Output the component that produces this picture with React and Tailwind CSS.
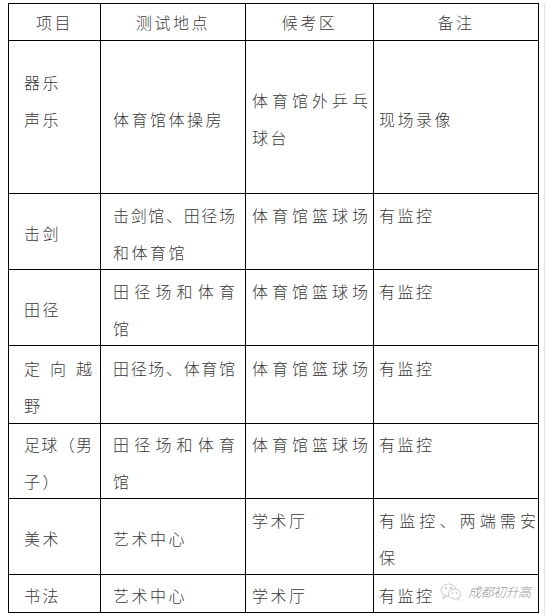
import React from 'react';

// each cell: array of lines; a line is [text, justify?]
const rows = [
  {
    h: 'h-[153px]',
    cells: [
      [['器乐'], ['声乐'], ['']],
      [['体育馆体操房']],
      [['体育馆外乒乓', true], ['球台']],
      [['现场录像']],
    ],
  },
  {
    h: 'h-[76px]',
    cells: [
      [['击剑']],
      [['击剑馆、田径场', true], ['和体育馆']],
      [['体育馆篮球场', true], ['']],
      [['有监控'], ['']],
    ],
  },
  {
    h: 'h-[76px]',
    cells: [
      [['田径']],
      [['田径场和体育', true], ['馆']],
      [['体育馆篮球场', true], ['']],
      [['有监控'], ['']],
    ],
  },
  {
    h: 'h-[78px]',
    cells: [
      [['定向越', true], ['野']],
      [['田径场、体育馆', true], ['']],
      [['体育馆篮球场', true], ['']],
      [['有监控'], ['']],
    ],
  },
  {
    h: 'h-[75px]',
    cells: [
      [['足球（男', true], ['子）']],
      [['田径场和体育', true], ['馆']],
      [['体育馆篮球场', true], ['']],
      [['有监控'], ['']],
    ],
  },
  {
    h: 'h-[76px]',
    cells: [
      [['美术']],
      [['艺术中心']],
      [['学术厅'], ['']],
      [['有监控、两端需安', true], ['保']],
    ],
  },
  {
    h: 'h-[38px]',
    cells: [[['书法']], [['艺术中心']], [['学术厅']], [['有监控']]],
  },
];

const colW = ['w-[92px]', 'w-[145px]', 'w-[128px]', 'w-[165px]'];
const colPad = [
  'pl-[15px] pr-[8px]',
  'pl-[12px] pr-[10px]',
  'pl-[6px] pr-[5px]',
  'pl-[5px] pr-[2px]',
];

const headers = ['项目', '测试地点', '候考区', '备注'];

const WeChatMark = () => (
  <div className="absolute left-[66px] top-[8px] flex items-center gap-[6px] text-[#9a9a9a]">
    <svg width="22" height="18" viewBox="0 0 22 18" fill="none" stroke="#c8c8c8" strokeWidth="1">
      <ellipse cx="8.5" cy="7" rx="7.5" ry="6" />
      <path d="M4 12 L3 15.5 L7 13" />
      <ellipse cx="14.5" cy="11" rx="6" ry="5" fill="#fff" />
      <path d="M17.5 15.5 L19 17.5 L18.5 14.5" />
      <circle cx="6" cy="5" r="0.8" fill="#c8c8c8" />
      <circle cx="11" cy="5" r="0.8" fill="#c8c8c8" />
      <circle cx="12.5" cy="10" r="0.6" fill="#c8c8c8" />
      <circle cx="16.5" cy="10" r="0.6" fill="#c8c8c8" />
    </svg>
    <span className="text-[13px] leading-[16px] italic tracking-[-0.5px]">成都初升高</span>
  </div>
);

const Cell = ({ lines, ci, last }) => (
  <div
    className={`${colW[ci]} ${colPad[ci]} relative flex flex-col justify-center pt-[4px] border-r border-b border-black overflow-visible`}
  >
    {lines.map(([text, justify], i) => (
      <div
        key={i}
        className={
          justify
            ? 'h-[37px] shrink-0 leading-[37px] whitespace-nowrap text-justify [text-align-last:justify] tracking-normal'
            : 'h-[37px] shrink-0 leading-[37px] whitespace-nowrap tracking-[2.5px]'
        }
      >
        {text}
      </div>
    ))}
    {last && ci === 3 && <WeChatMark />}
  </div>
);

export default function App() {
  return (
    <div
      className="w-[552px] h-[615px] bg-white flex pt-[3px] pl-[8px] text-[16px] font-light text-[#3a3a3a]"
      style={{ fontFamily: '"Noto Sans CJK SC", "Noto Sans", sans-serif' }}
    >
      <div className="flex flex-col border-l border-t border-black w-[531px] self-start">
        <div className="flex h-[37px]">
          {headers.map((t, ci) => (
            <div
              key={t}
              className={`${colW[ci]} flex items-center justify-center border-r border-b border-black tracking-[2.5px] leading-[37px]`}
            >
              {t}
            </div>
          ))}
        </div>
        {rows.map((r, ri) => (
          <div key={ri} className={`flex ${r.h}`}>
            {r.cells.map((lines, ci) => (
              <Cell key={ci} lines={lines} ci={ci} last={ri === rows.length - 1} />
            ))}
          </div>
        ))}
      </div>
      <div className="ml-[5px] w-px h-full bg-[#e4e4e4]" />
    </div>
  );
}
